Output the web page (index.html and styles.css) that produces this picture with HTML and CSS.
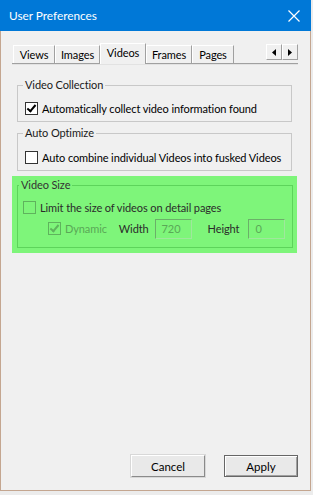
FILE: index.html
```html
<!DOCTYPE html>
<html lang="en">
<head>
    <meta charset="UTF-8">
    <title>User Preferences</title>
    <link rel="stylesheet" href="styles.css">
</head>
<body>
    <div class="window">
        <div class="titlebar">
            <span class="title">User Preferences</span>
            <svg class="close" width="12" height="12" viewBox="0 0 12 12">
                <path d="M0.5 0.5 L11.5 11.5 M11.5 0.5 L0.5 11.5" stroke="#fff" stroke-width="1.2" fill="none"/>
            </svg>
        </div>

        <div class="tabbar">
            <div class="tabs">
                <div class="tab tab-views">Views</div>
                <div class="tab tab-images">Images</div>
                <div class="tab tab-videos active">Videos</div>
                <div class="tab tab-frames">Frames</div>
                <div class="tab tab-pages">Pages</div>
            </div>
            <div class="scroller">
                <div class="arrow"><svg width="4" height="7" viewBox="0 0 4 7"><path d="M4 0 L0 3.5 L4 7 Z" fill="#000"/></svg></div>
                <div class="arrow"><svg width="4" height="7" viewBox="0 0 4 7"><path d="M0 0 L4 3.5 L0 7 Z" fill="#000"/></svg></div>
            </div>
        </div>

        <div class="panel">
            <fieldset class="group">
                <legend>Video Collection</legend>
                <label class="row">
                    <span class="check checked"></span>
                    Automatically collect video information found
                </label>
            </fieldset>

            <fieldset class="group second">
                <legend>Auto Optimize</legend>
                <label class="row">
                    <span class="check"></span>
                    Auto combine individual Videos into fusked Videos
                </label>
            </fieldset>

            <div class="highlight">
                <fieldset class="group size">
                    <legend>Video Size</legend>
                    <label class="row">
                        <span class="check"></span>
                        Limit the size of videos on detail pages
                    </label>
                    <div class="row sub">
                        <span class="check checked disabled"></span>
                        <span class="muted">Dynamic</span>
                        <span class="field-label width-label">Width</span>
                        <span class="input">720</span>
                        <span class="field-label height-label">Height</span>
                        <span class="input">0</span>
                    </div>
                </fieldset>
            </div>
        </div>

        <div class="buttons">
            <button class="btn">Cancel</button>
            <button class="btn default">Apply</button>
        </div>
    </div>
</body>
</html>
```

FILE: styles.css
```css
body {
    margin: 0;
    background: #ececec;
    font-family: Lato, "Noto Sans", sans-serif;
    font-size: 11px;
    letter-spacing: -0.1px;
    color: #000;
}
.window {
    width: 309px;
    height: 490px;
    border: 1px solid #c4a690;
    border-top: none;
    background: #f0f0f0;
    display: flex;
    flex-direction: column;
}
.titlebar {
    height: 31px;
    background: #0078d7;
    color: #fff;
    display: flex;
    align-items: center;
    justify-content: space-between;
    padding: 0 9px 0 9px;
    margin: 0 -1px;
}
.title {
    font-size: 11.8px;
    letter-spacing: 0;
}
.close {
    margin-right: 2px;
}

/* tabs */
.tabbar {
    display: flex;
    align-items: flex-start;
    justify-content: space-between;
    margin: 12px 12px 0 11px;
    height: 20px;
    border-bottom: 1px solid #a0a0a0;
    box-shadow: 0 1px 0 #e2e2e2;
}
.tabs {
    display: flex;
    align-items: flex-end;
    height: 20px;
    padding-left: 1px;
}
.tab {
    box-sizing: border-box;
    height: 18px;
    line-height: 17px;
    text-align: center;
    border-left: 1px solid #fff;
    border-top: 1px solid #fff;
    border-right: 1px solid #a0a0a0;
}
.tab.active {
    height: 21px;
    line-height: 18px;
    margin-bottom: -1px;
    background: #f0f0f0;
}
.tab-views { width: 42px; }
.tab-images { width: 45px; }
.tab-videos { width: 46px; }
.tab-frames { width: 46px; }
.tab-pages { width: 42px; }
.scroller {
    display: flex;
    margin-top: 1px;
}
.arrow {
    width: 16px;
    height: 16px;
    box-sizing: border-box;
    border: 1px solid;
    border-color: #fff #a0a0a0 #a0a0a0 #fff;
    background: #f0f0f0;
    display: flex;
    align-items: center;
    justify-content: center;
}

/* group boxes */
.panel {
    margin: 0 0 0 11px;
    width: 285px;
    flex: 1;
}
.group {
    margin: 14px 5px 0 5px;
    padding: 9px 7px 6px 7px;
    border: 1px solid #c8c8c8;
    min-width: 0;
}
.group legend {
    padding: 0 2px;
    margin-left: -2px;
    line-height: 14px;
    color: #1a1a1a;
}
.group.second {
    margin-top: 4px;
    padding-top: 10px;
}
.row {
    display: flex;
    align-items: center;
    height: 14px;
    white-space: nowrap;
}
.check {
    width: 11px;
    height: 11px;
    border: 1px solid #333;
    background: #fff;
    margin-right: 4px;
    position: relative;
    flex: none;
}
.check.checked::after {
    content: "";
    position: absolute;
    left: 3px;
    top: 0px;
    width: 3px;
    height: 7px;
    border: solid #000;
    border-width: 0 2px 2px 0;
    transform: rotate(40deg);
}

/* highlighted section */
.highlight {
    margin-top: 5px;
    background: #7ef57a;
    padding: 2px 4px 5px 5px;
}
.group.size {
    margin: 0;
    padding: 8px 5px 8px 5px;
    border-color: #5dd45b;
}
.size legend {
    color: #333;
    margin-left: -4px;
}
.size .check {
    border-color: #5fb35d;
    background: transparent;
}
.size .row {
    color: #2b2b2b;
}
.row.sub {
    height: 21px;
    margin-top: 4px;
    padding-left: 25px;
}
.check.disabled {
    border-color: #5fb35d;
}
.check.disabled::after {
    border-color: #5fb35d;
}
.muted {
    color: #5aa857;
}
.field-label {
    color: #2b2b2b;
}
.width-label {
    margin-left: 12px;
}
.height-label {
    margin-left: 16px;
}
.input {
    box-sizing: border-box;
    width: 37px;
    height: 20px;
    line-height: 18px;
    margin-left: 6px;
    padding-left: 6px;
    border: 1px solid;
    border-color: #6bb069 #9fe89c #9fe89c #6bb069;
    color: #5aa857;
}
.height-label + .input {
    margin-left: 9px;
}

/* buttons */
.buttons {
    display: flex;
    justify-content: flex-end;
    gap: 19px;
    padding: 0 12px 13px 0;
}
.btn {
    width: 74px;
    height: 22px;
    font-family: inherit;
    font-size: 11.5px;
    background: #e9e9e9;
    border: 1px solid;
    border-color: #fff #8a8a8a #8a8a8a #fff;
    box-shadow: 0 0 0 1px #d8d8d8;
    padding: 0;
}
.btn.default {
    border-color: #666;
    box-shadow: inset 1px 1px 0 #fff, inset -1px -1px 0 #a0a0a0;
}
```
